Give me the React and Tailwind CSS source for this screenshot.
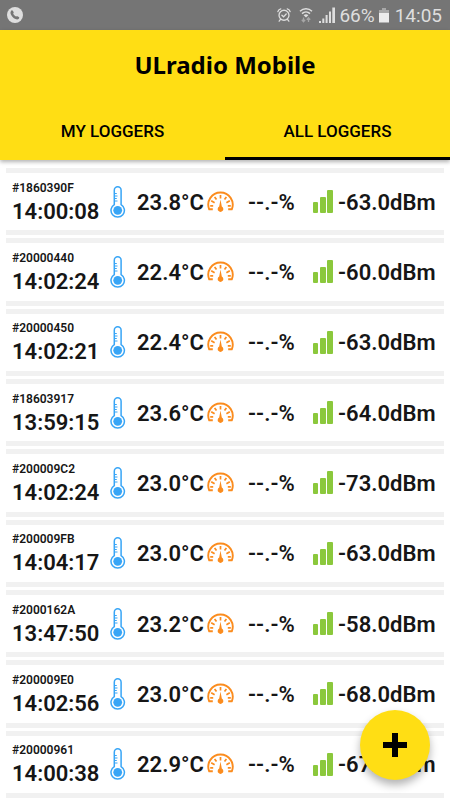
import React, { useState } from "react";

const LOGGERS = [
  { id: "#1860390F", time: "14:00:08", temp: "23.8°C", signal: "-63.0dBm" },
  { id: "#20000440", time: "14:02:24", temp: "22.4°C", signal: "-60.0dBm" },
  { id: "#20000450", time: "14:02:21", temp: "22.4°C", signal: "-63.0dBm" },
  { id: "#18603917", time: "13:59:15", temp: "23.6°C", signal: "-64.0dBm" },
  { id: "#200009C2", time: "14:02:24", temp: "23.0°C", signal: "-73.0dBm" },
  { id: "#200009FB", time: "14:04:17", temp: "23.0°C", signal: "-63.0dBm" },
  { id: "#2000162A", time: "13:47:50", temp: "23.2°C", signal: "-58.0dBm" },
  { id: "#200009E0", time: "14:02:56", temp: "23.0°C", signal: "-68.0dBm" },
  { id: "#20000961", time: "14:00:38", temp: "22.9°C", signal: "-67.0dBm" },
];

function PhoneIcon() {
  return (
    <svg className="size-4" viewBox="0 0 16 16" aria-hidden="true">
      <circle cx="8" cy="8" r="8" fill="#dedede" />
      <path
        d="M4.200 3.800c.6-.7 1.200-.6 1.600 0l.8 1.300c.3.500.1.900-.4 1.300.5 1.300 1.600 2.500 2.900 3.200.5-.5.9-.6 1.400-.3l1.300.8c.6.4.6 1 0 1.600-.9.9-2 .9-3.300.3-2.200-1-4-3-4.800-5.100-.4-1.200-.2-2.300.5-3.100z"
        fill="#757575"
      />
    </svg>
  );
}

function AlarmIcon() {
  return (
    <svg className="size-3.5" viewBox="0 0 16 16" fill="none" stroke="#dedede" strokeWidth="1.500" strokeLinecap="round" aria-hidden="true">
      <circle cx="8" cy="8.300" r="5.700" />
      <path d="M5.600 8.200l1.900 1.900 3-3.200M4 13l-1.500 2M12 13l1.500 2M1 4.200C1.400 2.500 2.600 1.400 4.300 1M15 4.200c-.4-1.700-1.600-2.800-3.300-3.200" />
    </svg>
  );
}

function WifiIcon() {
  return (
    <svg className="h-4 w-3.5" viewBox="0 0 14 16" fill="none" aria-hidden="true">
      <path d="M1 4.200c3.400-3.300 8.600-3.300 12 0M3 6.600c2.300-2.200 5.700-2.200 8 0" stroke="#dedede" strokeWidth="1.500" />
      <path d="M4.600 8.200c1.500-1.300 3.300-1.300 4.800 0L7 10.600z" fill="#dedede" />
      <path d="M4.500 10.500v4M2.800 12.800l1.700 1.900 1.700-1.900M9.500 15v-4M7.800 12.700l1.700-1.900 1.700 1.900" stroke="#a6a6a6" strokeWidth="1.300" />
    </svg>
  );
}

function CellIcon() {
  return (
    <svg className="size-4" viewBox="0 0 16 16" fill="#dedede" aria-hidden="true">
      <path d="M0 14h2v2H0zM3.300 11.500h2V16h-2zM6.600 8h2v8h-2zM10 4.500h2V16h-2zM13.300 0.500H16V16h-2.700z" />
    </svg>
  );
}

function BatteryIcon() {
  return (
    <svg className="h-4 w-2.5" viewBox="0 0 10 16" aria-hidden="true">
      <path d="M3 1h4v2h3v3H0V3h3z" fill="#a8a8a8" />
      <path d="M0 6h10v9.500H0z" fill="#ececec" />
    </svg>
  );
}

function ThermometerIcon() {
  return (
    <svg className="h-8 w-4" viewBox="0 0 16 32" fill="none" aria-hidden="true">
      <path
        d="M4.300 18.600V4.200a3.400 3.400 0 0 1 6.800 0v14.400a6.700 6.700 0 1 1-6.800 0z"
        stroke="#38a5f6"
        strokeWidth="1.500"
      />
      <circle cx="7.700" cy="24.300" r="4.400" fill="#38a5f6" />
      <path d="M4.500 7.500h2.300M4.500 10h3M4.500 12.500h2.300M4.500 15h3" stroke="#38a5f6" strokeWidth="1" />
    </svg>
  );
}

function GaugeIcon() {
  return (
    <svg className="h-[22px] w-[27px]" viewBox="0 0 27 22" fill="none" aria-hidden="true">
      <path d="M5.800 18.300H2.200A12.200 12.200 0 1 1 24.800 18.300h-3.600" stroke="#fb8c1e" strokeWidth="1.900" strokeLinejoin="round" />
      <path
        d="M13.500 4v3.500M7.600 5.900l1.900 2.700M19.400 5.900l-1.900 2.700M4.200 9.800l3.400 2M22.800 9.800l-3.400 2M3.200 14.800h3M23.800 14.800h-3"
        stroke="#fb8c1e"
        strokeWidth="1.700"
      />
      <path d="M13.500 8.500l1.300 7.100a2.800 2.800 0 1 1-2.600 0z" fill="#fb8c1e" />
    </svg>
  );
}

function SignalIcon() {
  return (
    <svg className="h-[23px] w-5" viewBox="0 0 20 23" fill="#8bc83c" aria-hidden="true">
      <rect x="0" y="12" width="5" height="11" rx="1" />
      <rect x="7" y="7" width="6" height="16" rx="1" />
      <rect x="14" y="0" width="6" height="23" rx="1" />
    </svg>
  );
}

function StatusBar() {
  return (
    <div className="flex h-[30px] items-center justify-between bg-[#757575] pr-2 pl-[7px] text-[#dedede]">
      <PhoneIcon />
      <div className="flex items-center text-[19px] leading-6">
        <span className="mr-2"><AlarmIcon /></span>
        <span className="mr-1.5"><WifiIcon /></span>
        <span className="mr-1"><CellIcon /></span>
        <span className="mr-1 pt-0.5">66%</span>
        <span className="mr-1.5"><BatteryIcon /></span>
        <span className="pt-0.5">14:05</span>
      </div>
    </div>
  );
}

function Tab({ label, active, onClick }) {
  return (
    <button
      type="button"
      role="tab"
      aria-selected={active}
      onClick={onClick}
      className={
        "flex-1 border-b-[3px] pt-1.5 text-[17px] font-medium " +
        (active ? "border-black" : "border-transparent")
      }
    >
      {label}
    </button>
  );
}

function LoggerRow({ logger }) {
  return (
    <li className="grid flex-1 grid-cols-[98fr_27fr_70fr_41fr_65fr_25fr_106fr] items-center border-y-[5px] border-[#f1f1f1] pl-1.5 text-[22px] leading-7 font-semibold whitespace-nowrap text-[#161616]">
      <div className="pt-0.5">
        <div className="text-xs">{logger.id}</div>
        <div className="pt-0.5">{logger.time}</div>
      </div>
      <ThermometerIcon />
      <span className="pt-0.5">{logger.temp}</span>
      <GaugeIcon />
      <span className="pt-0.5">--.-%</span>
      <SignalIcon />
      <span className="pt-0.5">{logger.signal}</span>
    </li>
  );
}

export default function App() {
  const [tab, setTab] = useState("all");
  return (
    <div className="flex min-h-screen flex-col bg-white font-['Roboto',sans-serif]">
      <StatusBar />
      <header className="relative bg-[#ffde14] text-black shadow-[0_2px_4px_rgba(0,0,0,0.3)]">
        <h1 className="flex h-[70px] items-center justify-center font-['Noto_Sans',sans-serif] text-2xl font-bold">
          ULradio Mobile
        </h1>
        <div role="tablist" className="flex h-[60px]">
          <Tab label="MY LOGGERS" active={tab === "my"} onClick={() => setTab("my")} />
          <Tab label="ALL LOGGERS" active={tab === "all"} onClick={() => setTab("all")} />
        </div>
      </header>
      <ul className="flex flex-1 flex-col gap-[3px] px-1.5 pt-2 pb-0.5">
        {LOGGERS.map((logger) => (
          <LoggerRow key={logger.id} logger={logger} />
        ))}
      </ul>
      <button
        type="button"
        aria-label="Add logger"
        className="fixed right-5 bottom-5 flex size-[70px] items-center justify-center rounded-full bg-[#ffde14] shadow-[0_5px_9px_rgba(0,0,0,0.3)]"
      >
        <svg className="size-6" viewBox="0 0 24 24" aria-hidden="true">
          <path d="M9 0h6v9h9v6h-9v9H9v-9H0V9h9z" fill="#000" />
        </svg>
      </button>
    </div>
  );
}
